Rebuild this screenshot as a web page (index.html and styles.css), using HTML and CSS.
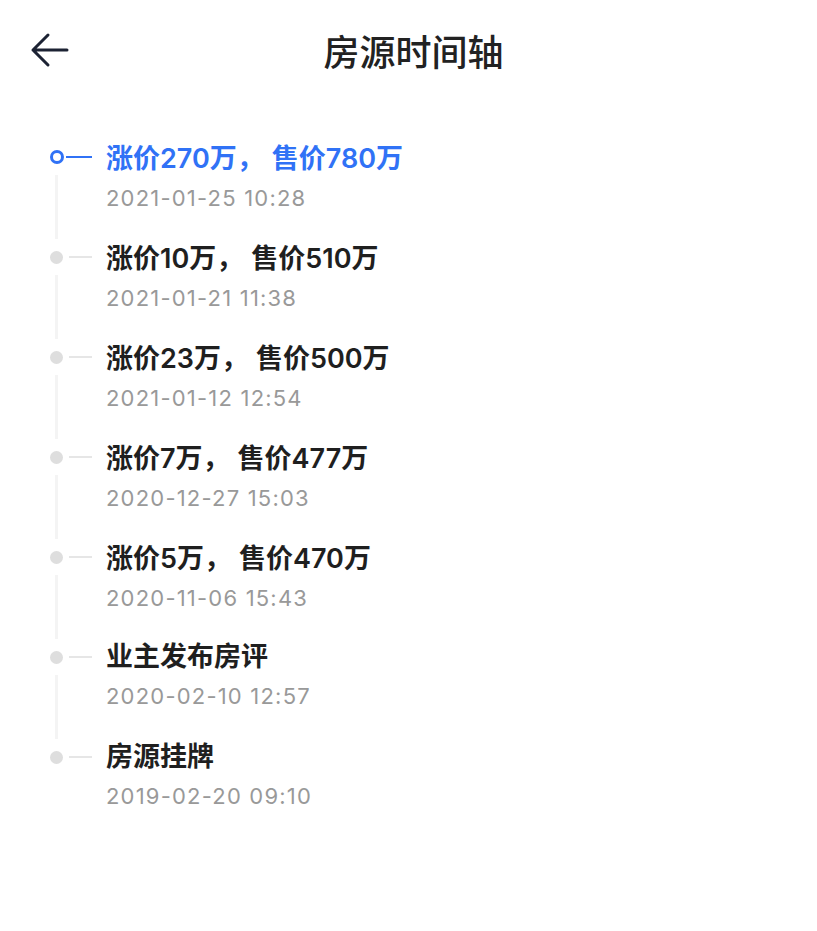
FILE: index.html
```html
<!DOCTYPE html>
<html>
<head>
  <title>房源时间轴</title>
  <link rel="stylesheet" href="styles.css">
</head>
<body>
  <div class="header">
    <div class="back">
      <svg width="40" height="36" viewBox="0 0 40 36">
        <path d="M38 18 H4 M19 3 L4 18 L19 33" fill="none" stroke="#1c2233" stroke-width="3" stroke-linecap="round" stroke-linejoin="round"/>
      </svg>
    </div>
    <h1 class="title">房源时间轴</h1>
  </div>

  <div class="timeline">
    <div class="item active">
      <div class="marker">
        <div class="node"><span class="dot"></span><span class="dash"></span></div>
        <div class="line"></div>
      </div>
      <div class="info">
        <div class="event">涨价270万<span class="punct">，</span>售价780万</div>
        <div class="date">2021-01-25 10:28</div>
      </div>
    </div>

    <div class="item">
      <div class="marker">
        <div class="node"><span class="dot"></span><span class="dash"></span></div>
        <div class="line"></div>
      </div>
      <div class="info">
        <div class="event">涨价10万<span class="punct">，</span>售价510万</div>
        <div class="date">2021-01-21 11:38</div>
      </div>
    </div>

    <div class="item">
      <div class="marker">
        <div class="node"><span class="dot"></span><span class="dash"></span></div>
        <div class="line"></div>
      </div>
      <div class="info">
        <div class="event">涨价23万<span class="punct">，</span>售价500万</div>
        <div class="date">2021-01-12 12:54</div>
      </div>
    </div>

    <div class="item">
      <div class="marker">
        <div class="node"><span class="dot"></span><span class="dash"></span></div>
        <div class="line"></div>
      </div>
      <div class="info">
        <div class="event">涨价7万<span class="punct">，</span>售价477万</div>
        <div class="date">2020-12-27 15:03</div>
      </div>
    </div>

    <div class="item">
      <div class="marker">
        <div class="node"><span class="dot"></span><span class="dash"></span></div>
        <div class="line"></div>
      </div>
      <div class="info">
        <div class="event">涨价5万<span class="punct">，</span>售价470万</div>
        <div class="date">2020-11-06 15:43</div>
      </div>
    </div>

    <div class="item">
      <div class="marker">
        <div class="node"><span class="dot"></span><span class="dash"></span></div>
        <div class="line"></div>
      </div>
      <div class="info">
        <div class="event">业主发布房评</div>
        <div class="date">2020-02-10 12:57</div>
      </div>
    </div>

    <div class="item last">
      <div class="marker">
        <div class="node"><span class="dot"></span><span class="dash"></span></div>
      </div>
      <div class="info">
        <div class="event">房源挂牌</div>
        <div class="date">2019-02-20 09:10</div>
      </div>
    </div>
  </div>
</body>
</html>
```

FILE: styles.css
```css
body {
  margin: 0;
  background-color: #fff;
  font-family: Inter, "Noto Sans CJK SC", sans-serif;
  color: #1f1f1f;
}
.header {
  height: 100px;
  display: flex;
  align-items: center;
  justify-content: center;
  padding-left: 10px;
  position: relative;
}
.back {
  position: absolute;
  left: 29px;
  top: 32px;
  height: 36px;
}
.title {
  margin: 0;
  font-family: "Noto Sans CJK SC", sans-serif;
  font-size: 36px;
  font-weight: 500;
  line-height: 40px;
  color: #222;
}
.timeline {
  padding-top: 39px;
}
.item {
  display: flex;
  height: 100px;
}
.marker {
  width: 106px;
  display: flex;
  flex-direction: column;
}
.node {
  height: 36px;
  display: flex;
  align-items: center;
  padding-left: 50px;
}
.dot {
  width: 13px;
  height: 13px;
  border-radius: 50%;
  background-color: #dedede;
  box-sizing: border-box;
}
.dash {
  width: 23px;
  height: 2px;
  margin-left: 6px;
  background-color: #e6e6e6;
}
.line {
  width: 3px;
  height: 64px;
  margin-left: 55px;
  background-color: #f4f4f4;
}
.active .dot {
  background-color: #fff;
  border: 3px solid #3072f6;
  width: 14px;
  height: 14px;
}
.active .dash {
  margin-left: 2px;
  width: 26px;
  background-color: #3072f6;
}
.event {
  font-size: 27px;
  font-weight: 600;
  line-height: 36px;
  color: #1f1f1f;
  text-spacing-trim: space-all;
}
.punct {
  font-family: "Noto Sans CJK SC", sans-serif;
  margin-right: 8px;
}
.active .event {
  color: #3072f6;
}
.date {
  margin-top: 6px;
  font-size: 22px;
  line-height: 30px;
  letter-spacing: 1.2px;
  color: #999;
}
```
